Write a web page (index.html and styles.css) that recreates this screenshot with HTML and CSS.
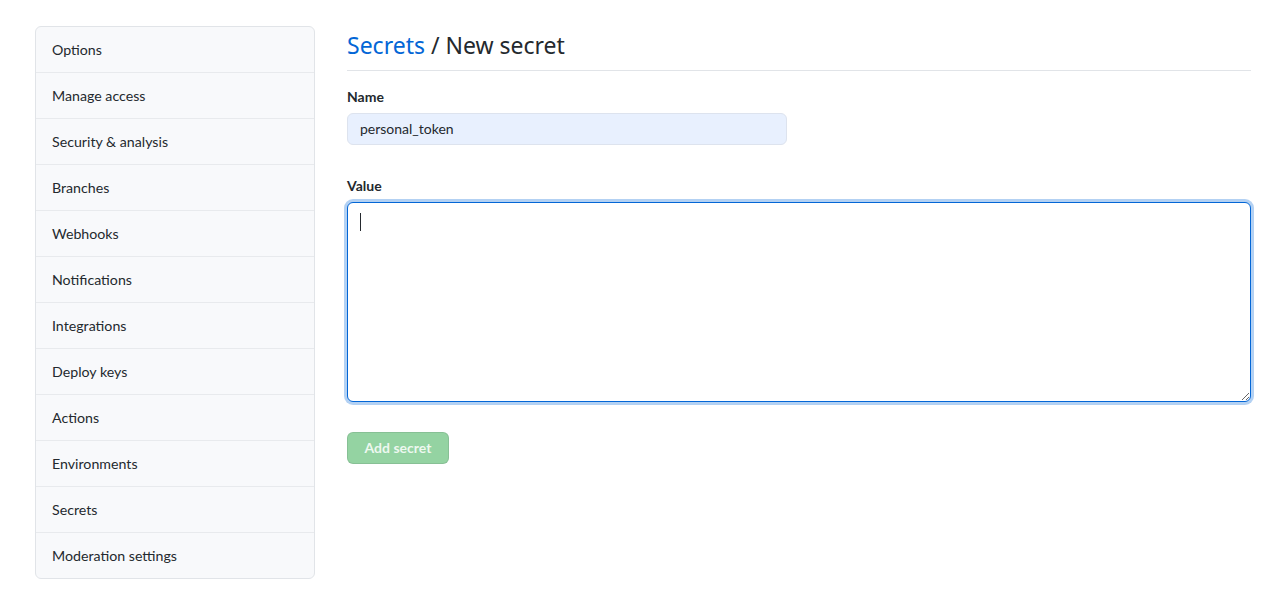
FILE: index.html
```html
<!DOCTYPE html>
<html lang="en">
<head>
<meta charset="utf-8">
<title>New secret</title>
<link rel="stylesheet" href="styles.css">
</head>
<body>
<div class="page">
  <nav class="menu">
    <a class="menu-item">Options</a>
    <a class="menu-item">Manage access</a>
    <a class="menu-item">Security &amp; analysis</a>
    <a class="menu-item">Branches</a>
    <a class="menu-item">Webhooks</a>
    <a class="menu-item">Notifications</a>
    <a class="menu-item">Integrations</a>
    <a class="menu-item">Deploy keys</a>
    <a class="menu-item">Actions</a>
    <a class="menu-item">Environments</a>
    <a class="menu-item">Secrets</a>
    <a class="menu-item">Moderation settings</a>
  </nav>
  <main class="main">
    <h2 class="subhead"><a class="subhead-link">Secrets</a> / New secret</h2>
    <form class="form">
      <div class="form-group">
        <label class="form-label" for="name">Name</label>
        <input class="input input-autofill" id="name" type="text" value="personal_token">
      </div>
      <div class="form-group form-group-value">
        <label class="form-label" for="value">Value</label>
        <div class="textarea-wrap">
          <textarea class="input textarea is-focused" id="value"></textarea>
          <span class="caret"></span>
        </div>
      </div>
      <button class="btn-primary" type="button" disabled>Add secret</button>
    </form>
  </main>
</div>
</body>
</html>
```

FILE: styles.css
```css
* { box-sizing: border-box; }
html, body { margin: 0; padding: 0; background: #fff; }
body {
  font-family: Lato, "Noto Sans", "Liberation Sans", sans-serif;
  font-size: 14px;
  line-height: 1.5;
  color: #24292e;
}
.page {
  display: flex;
  align-items: flex-start;
  gap: 32px;
  padding: 26px 21px 0 35px;
}
.menu {
  flex: 0 0 280px;
  display: flex;
  flex-direction: column;
  background: #f8f9fb;
  border: 1px solid #e1e4e8;
  border-radius: 6px;
  overflow: hidden;
}
.menu-item {
  display: flex;
  align-items: center;
  height: 46px;
  padding: 0 16px;
  border-top: 1px solid #e8eaed;
  color: #24292e;
  font-size: 14.2px;
  text-decoration: none;
}
.menu-item:first-child { border-top: 0; height: 45px; }
.main { flex: 1; min-width: 0; }
.subhead {
  margin: 0;
  padding-top: 1px;
  padding-bottom: 7px;
  border-bottom: 1px solid #e1e4e8;
  font-family: "Noto Sans", Lato, sans-serif;
  font-size: 23px;
  font-weight: 400;
  line-height: 36px;
  color: #24292e;
}
.subhead-link { color: #0366d6; text-decoration: none; }
.form { display: flex; flex-direction: column; align-items: flex-start; }
.form-group { display: flex; flex-direction: column; width: 100%; margin-top: 15px; }
.form-group-value { margin-top: 30px; }
.form-label {
  font-weight: 700;
  font-size: 14px;
  line-height: 21px;
  margin-bottom: 6px;
}
.input {
  font-family: inherit;
  font-size: 14px;
  line-height: 20px;
  color: #24292e;
  border: 1px solid #e1e4e8;
  border-radius: 6px;
  padding: 4px 12px 6px;
  outline: none;
}
.input-autofill {
  width: 440px;
  height: 32px;
  background: #e8f0fe;
  border-color: #dde3ee;
}
.textarea-wrap { position: relative; width: 100%; }
.textarea {
  display: block;
  width: 100%;
  height: 200px;
  resize: vertical;
  background: #fff;
  padding: 8px 12px;
}
.textarea.is-focused {
  border-color: #0366d6;
  box-shadow: 0 0 0 3px rgba(3, 102, 214, 0.3);
}
.caret {
  position: absolute;
  left: 13px;
  top: 11px;
  width: 1px;
  height: 18px;
  background: #24292e;
}
.btn-primary {
  margin-top: 30px;
  height: 32px;
  width: 102px;
  padding: 0 0 1px;
  font-family: inherit;
  font-size: 14px;
  font-weight: 700;
  color: rgba(255, 255, 255, 0.85);
  background: #94d3a2;
  border: 1px solid rgba(27, 31, 35, 0.1);
  border-radius: 6px;
}
```
